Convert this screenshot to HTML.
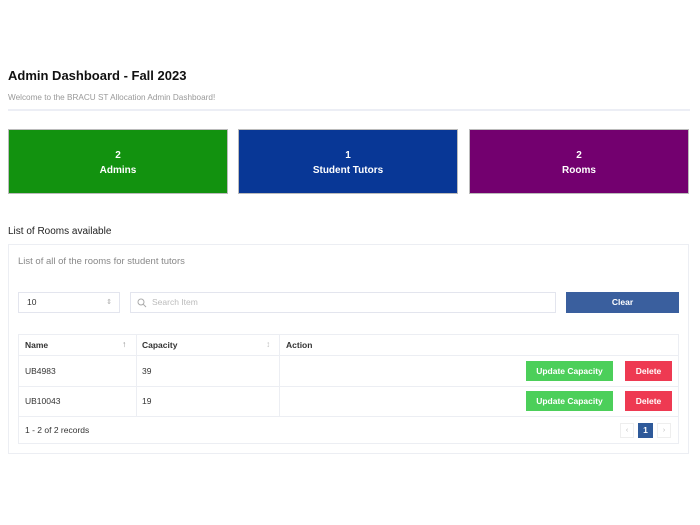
<!DOCTYPE html><html><head><style>
body{margin:0;width:700px;height:525px;background:#fff;font-family:"Liberation Sans",sans-serif;position:relative;overflow:hidden}
.a{position:absolute}
.card{position:absolute;top:129px;height:65px;width:220px;color:#fff;font-weight:bold;font-size:10px;text-align:center;box-sizing:border-box;border:1px solid #bbb;line-height:15px;padding-top:18px}
.cell{position:absolute;font-size:8.5px;color:#333}
.btn{position:absolute;color:#fff;font-weight:bold;font-size:8.5px;text-align:center;line-height:20px;height:20px}
</style></head><body>
<div class="a" style="left:8px;top:68px;font-size:13px;font-weight:bold;color:#111">Admin Dashboard - Fall 2023</div>
<div class="a" style="left:8px;top:93px;font-size:8.2px;color:#999">Welcome to the BRACU ST Allocation Admin Dashboard!</div>
<div class="a" style="left:8px;top:109px;width:682px;height:2px;background:#eceef5"></div>
<div class="card" style="left:8px;background:#12920f">2<br>Admins</div>
<div class="card" style="left:238px;background:#083796">1<br>Student Tutors</div>
<div class="card" style="left:469px;width:220px;background:#73006f">2<br>Rooms</div>
<div class="a" style="left:8px;top:226px;font-size:10px;color:#222">List of Rooms available</div>
<div class="a" style="left:8px;top:244px;width:681px;height:210px;border:1px solid #eceef3;box-sizing:border-box"></div>
<div class="a" style="left:18px;top:256px;font-size:9.5px;color:#888">List of all of the rooms for student tutors</div>
<div class="a" style="left:18px;top:292px;width:102px;height:21px;border:1px solid #e3e5ee;box-sizing:border-box;font-size:8.5px;line-height:19px;padding-left:8px;color:#333">10<span style="position:absolute;right:7px;color:#aaa;font-size:7px">⇕</span></div>
<div class="a" style="left:130px;top:292px;width:426px;height:21px;border:1px solid #e3e5ee;box-sizing:border-box;font-size:8.5px;line-height:19px;padding-left:21px;color:#bbb">Search Item
<svg style="position:absolute;left:6px;top:5px" width="10" height="10" viewBox="0 0 10 10"><circle cx="4" cy="4" r="3" fill="none" stroke="#aaa" stroke-width="1"/><path d="M6.3 6.3L9 9" stroke="#aaa"/></svg></div>
<div class="btn" style="left:566px;top:292px;width:113px;height:21px;background:#3a5f9e;line-height:21px">Clear</div>
<div class="a" style="left:18px;top:334px;width:661px;height:110px;border:1px solid #eceef3;box-sizing:border-box"></div>
<div class="a" style="left:18px;top:355px;width:661px;height:1px;background:#eceef3"></div>
<div class="a" style="left:18px;top:386px;width:661px;height:1px;background:#eceef3"></div>
<div class="a" style="left:18px;top:416px;width:661px;height:1px;background:#eceef3"></div>
<div class="a" style="left:136px;top:334px;width:1px;height:82px;background:#eceef3"></div>
<div class="a" style="left:279px;top:334px;width:1px;height:82px;background:#eceef3"></div>
<div class="cell" style="left:25px;top:340px;font-weight:bold">Name</div>
<div class="cell" style="left:122px;top:339px;color:#888">↑</div>
<div class="cell" style="left:142px;top:340px;font-weight:bold">Capacity</div>
<div class="cell" style="left:266px;top:339px;color:#bbb">↕</div>
<div class="cell" style="left:286px;top:340px;font-weight:bold">Action</div>
<div class="cell" style="left:25px;top:366px">UB4983</div>
<div class="cell" style="left:142px;top:366px">39</div>
<div class="cell" style="left:25px;top:396px">UB10043</div>
<div class="cell" style="left:142px;top:396px">19</div>
<div class="btn" style="left:526px;top:361px;width:87px;background:#4ccf5a">Update Capacity</div>
<div class="btn" style="left:625px;top:361px;width:47px;background:#ee3a52">Delete</div>
<div class="btn" style="left:526px;top:391px;width:87px;background:#4ccf5a">Update Capacity</div>
<div class="btn" style="left:625px;top:391px;width:47px;background:#ee3a52">Delete</div>
<div class="cell" style="left:25px;top:425px">1 - 2 of 2 records</div>
<div class="a" style="left:620px;top:423px;width:14px;height:15px;border:1px solid #eee;box-sizing:border-box;font-size:7px;color:#bbb;text-align:center;line-height:13px">‹</div>
<div class="a" style="left:638px;top:423px;width:15px;height:15px;background:#2f5a9a;font-size:8.5px;font-weight:bold;color:#fff;text-align:center;line-height:15px">1</div>
<div class="a" style="left:657px;top:423px;width:14px;height:15px;border:1px solid #eee;box-sizing:border-box;font-size:7px;color:#bbb;text-align:center;line-height:13px">›</div>
</body></html>
